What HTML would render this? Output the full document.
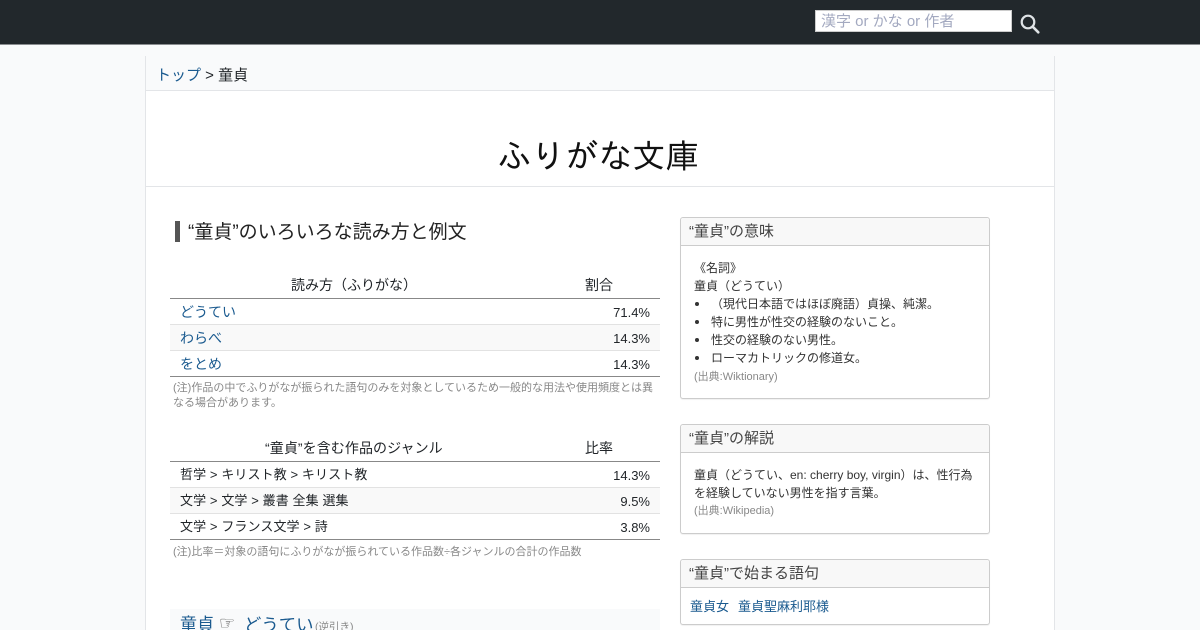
<!DOCTYPE html>
<html lang="ja"><head><meta charset="utf-8"><title>童貞</title>
<style>
html,body{margin:0;padding:0;background:#f9fafb;height:630px;overflow:hidden;}
body{width:1200px;position:relative;font-family:"Liberation Sans","Noto Sans CJK JP",sans-serif;color:#212529;}
.a{position:absolute;white-space:nowrap;}
a{color:#1a5a8f;text-decoration:none;}
.line{position:absolute;height:1px;}
.t{line-height:20px;}
.box{position:absolute;left:680px;width:308px;background:#fff;border:1px solid #ccc;border-radius:3px;box-shadow:0 1px 1px rgba(0,0,0,.06);}
.box .h{height:27px;background:#f8f8f8;border-bottom:1px solid #ccc;font-size:15px;line-height:28px;color:#444;padding-left:8px;border-radius:3px 3px 0 0;}
.note{font-size:11px;color:#888;}
.src{font-size:11px;color:#888;}
.s{font-size:12px;color:#333;}
</style></head><body>
<div class="a" style="left:0;top:0;width:1200px;height:45px;background:#22282c;border-bottom:1px solid #8a8d90;box-sizing:border-box"></div>
<div class="a" style="left:815px;top:10px;width:197px;height:22px;background:#fff;border:1px solid #ccc;box-sizing:border-box;font-size:15px;line-height:22px;color:#a3a9c0;padding-left:5px">漢字 or かな or 作者</div>
<svg class="a" style="left:1018px;top:12px" width="24" height="24" viewBox="0 0 24 24"><circle cx="10" cy="10" r="6.3" fill="none" stroke="#dfe3e6" stroke-width="2.2"/><path d="M14.7 14.7l5.6 5.6" stroke="#dfe3e6" stroke-width="2.6" stroke-linecap="round"/></svg>

<div class="a" style="left:145px;top:56px;width:910px;height:574px;background:#fff;border-left:1px solid #e3e5e8;border-right:1px solid #e3e5e8;box-sizing:border-box"></div>
<div class="a" style="left:146px;top:56px;width:908px;height:34px;background:#f9fafb"></div>
<div class="line" style="left:146px;top:90px;width:908px;background:#e3e5e8"></div>
<div class="line" style="left:146px;top:186px;width:908px;background:#e3e5e8"></div>
<div class="a t" style="left:156px;top:66px;font-size:15px"><a href="#">トップ</a> &gt; 童貞</div>
<div class="a" style="left:498px;top:137px;font-family:'Liberation Sans','IPAGothic',sans-serif;font-size:33.5px;line-height:42px;color:#111">ふりがな文庫</div>

<div class="a" style="left:175px;top:221px;width:5px;height:21px;background:#555"></div>
<div class="a" style="left:188px;top:220px;font-size:19px;line-height:25px;color:#222">“童貞”のいろいろな読み方と例文</div>

<div class="a t" style="left:291px;top:275px;font-size:14px">読み方（ふりがな）</div>
<div class="a t" style="left:585px;top:275px;font-size:14px">割合</div>
<div class="line" style="left:170px;top:298px;width:490px;background:#888"></div>
<div class="a" style="left:170px;top:325px;width:490px;height:25px;background:#f9f9f9"></div>
<div class="line" style="left:170px;top:324px;width:490px;background:#e2e2e2"></div>
<div class="line" style="left:170px;top:350px;width:490px;background:#e2e2e2"></div>
<div class="line" style="left:170px;top:376px;width:490px;background:#888"></div>
<div class="a t" style="left:180px;top:302px;font-size:14px"><a href="#">どうてい</a></div>
<div class="a t" style="left:180px;top:328px;font-size:14px"><a href="#">わらべ</a></div>
<div class="a t" style="left:180px;top:354px;font-size:14px"><a href="#">をとめ</a></div>
<div class="a t" style="right:550px;top:303px;font-size:13px">71.4%</div>
<div class="a t" style="right:550px;top:329px;font-size:13px">14.3%</div>
<div class="a t" style="right:550px;top:355px;font-size:13px">14.3%</div>
<div class="a note" style="left:173px;top:381px;line-height:15px">(注)作品の中でふりがなが振られた語句のみを対象としているため一般的な用法や使用頻度とは異<br>なる場合があります。</div>

<div class="a t" style="left:265px;top:438px;font-size:14px;letter-spacing:.08px">“童貞”を含む作品のジャンル</div>
<div class="a t" style="left:585px;top:438px;font-size:14px">比率</div>
<div class="line" style="left:170px;top:461px;width:490px;background:#888"></div>
<div class="a" style="left:170px;top:488px;width:490px;height:25px;background:#f9f9f9"></div>
<div class="line" style="left:170px;top:487px;width:490px;background:#e2e2e2"></div>
<div class="line" style="left:170px;top:513px;width:490px;background:#e2e2e2"></div>
<div class="line" style="left:170px;top:539px;width:490px;background:#888"></div>
<div class="a t" style="left:180px;top:465px;font-size:13px;letter-spacing:.1px">哲学 &gt; キリスト教 &gt; キリスト教</div>
<div class="a t" style="left:180px;top:491px;font-size:13px;letter-spacing:.1px">文学 &gt; 文学 &gt; 叢書 全集 選集</div>
<div class="a t" style="left:180px;top:517px;font-size:13px;letter-spacing:.1px">文学 &gt; フランス文学 &gt; 詩</div>
<div class="a t" style="right:550px;top:466px;font-size:13px">14.3%</div>
<div class="a t" style="right:550px;top:492px;font-size:13px">9.5%</div>
<div class="a t" style="right:550px;top:518px;font-size:13px">3.8%</div>
<div class="a note" style="left:173px;top:545px;line-height:15px">(注)比率＝対象の語句にふりがなが振られている作品数÷各ジャンルの合計の作品数</div>

<div class="a" style="left:170px;top:609px;width:490px;height:21px;background:#f9fafb"></div>
<div class="a" style="left:180px;top:613px;font-size:17px;line-height:24px"><a href="#">童貞</a></div>
<div class="a" style="left:219px;top:612px;font-size:18px;line-height:24px;color:#444;font-family:'DejaVu Sans',sans-serif">☞</div>
<div class="a" style="left:244px;top:613px;font-size:17.4px;line-height:24px"><a href="#">どうてい</a></div>
<div class="a" style="left:315px;top:619px;font-size:10.5px;line-height:16px;color:#888">(逆引き)</div>

<div class="box" style="top:217px;height:180px"><div class="h">“童貞”の意味</div></div>
<div class="a s" style="left:694px;top:259px;line-height:18px">《名詞》<br>童貞（どうてい）</div>
<div class="a" style="left:695px;top:302px;width:4px;height:4px;border-radius:50%;background:#333"></div>
<div class="a" style="left:695px;top:320px;width:4px;height:4px;border-radius:50%;background:#333"></div>
<div class="a" style="left:695px;top:338px;width:4px;height:4px;border-radius:50%;background:#333"></div>
<div class="a" style="left:695px;top:356px;width:4px;height:4px;border-radius:50%;background:#333"></div>
<div class="a s" style="left:711px;top:295px;line-height:18px">（現代日本語ではほぼ廃語）貞操、純潔。<br>特に男性が性交の経験のないこと。<br>性交の経験のない男性。<br>ローマカトリックの修道女。</div>
<div class="a src" style="left:694px;top:369px;line-height:16px">(出典:Wiktionary)</div>

<div class="box" style="top:424px;height:108px"><div class="h">“童貞”の解説</div></div>
<div class="a s" style="left:694px;top:466px;line-height:18px">童貞（どうてい、en: cherry boy, virgin）は、性行為<br>を経験していない男性を指す言葉。</div>
<div class="a src" style="left:694px;top:503px;line-height:16px">(出典:Wikipedia)</div>

<div class="box" style="top:559px;height:64px"><div class="h">“童貞”で始まる語句</div></div>
<div class="a" style="left:690px;top:597px;font-size:13px;line-height:20px"><a href="#">童貞女</a></div>
<div class="a" style="left:738px;top:597px;font-size:13px;line-height:20px"><a href="#">童貞聖麻利耶様</a></div>
</body></html>
